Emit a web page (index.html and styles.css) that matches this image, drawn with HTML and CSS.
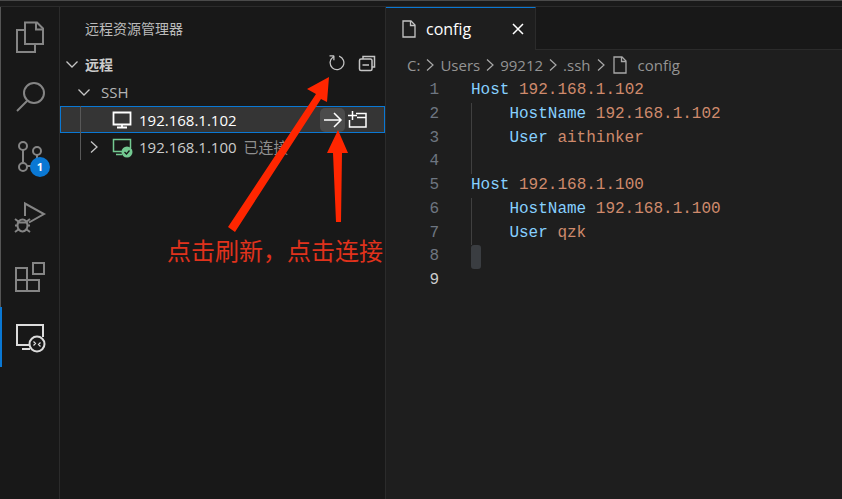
FILE: index.html
```html
<!DOCTYPE html>
<html lang="zh">
<head>
<meta charset="utf-8">
<title>config</title>
<link rel="stylesheet" href="styles.css">
</head>
<body>
<div class="window">
  <div class="titlestrip"></div>
  <div class="main">
    <nav class="activity">
      <div class="cell"><svg class="act" viewBox="0 7 60 60" width="60" height="60"><path d="M25 30h-8v22h18v-8"/><path d="M25 22.500h12l6 6V44H25z"/><path d="M36 22.500v7h7"/></svg></div>
      <div class="cell"><svg class="act" viewBox="0 67 60 60" width="60" height="60"><circle cx="34" cy="93" r="10"/><path d="M27 101L17 111"/></svg></div>
      <div class="cell">
        <svg class="act" viewBox="0 127 60 60" width="60" height="60"><circle cx="23" cy="146" r="4"/><circle cx="37" cy="151" r="4"/><circle cx="23" cy="167" r="4"/><path d="M23 150v13M27 166h4l6-4v-7"/></svg>
        <span class="badge">1</span>
      </div>
      <div class="cell"><svg class="act" viewBox="0 187 60 60" width="60" height="60"><path d="M25 216V203.500l19 10.500-15 8.500"/><ellipse cx="22.500" cy="225.500" rx="5" ry="6"/><path d="M15 219l4 3M30 219l-4 3M15 225.500h3M27 225.500h3M15 232l4-3M30 232l-4-3M18.500 222.500h8"/></svg></div>
      <div class="cell"><svg class="act" viewBox="0 247 60 60" width="60" height="60"><path d="M16 268h11v23H16zM16 280h23v11H27v-11M39 280v-1M33 263h11v11H33z"/></svg></div>
      <div class="cell cell-active">
        <svg class="act-on" viewBox="0 307 60 60" width="60" height="60"><path d="M29 345H17v-20h26v12"/><path d="M22 349h8"/><circle cx="37" cy="344" r="7.500"/><path d="M33.500 345.500l2-2-2-2M40.500 342.500l-2 2 2 2" class="thin"/></svg>
      </div>
    </nav>

    <aside class="sidebar">
      <div class="side-title">远程资源管理器</div>
      <div class="row row-head">
        <svg class="chev" viewBox="0 0 16 16" width="16" height="16"><path d="M2.500 5.500L8 11l5.500-5.500"/></svg>
        <span class="head-label">远程</span>
        <span class="row-actions">
          <svg class="refresh" viewBox="0 1 16 16" width="20" height="20"><path d="M4.681 3H2V2h3.500l.5.500V6H5V4a5 5 0 1 0 4.530-.761l.302-.954A6 6 0 1 1 4.681 3z"/></svg>
          <svg class="ico ico-grey" viewBox="0 0 20 20" width="20" height="20"><path d="M6 5V2.500h11.500V13H15"/><rect x="2.500" y="5" width="12.500" height="11.500" rx="1.500"/><path d="M5.500 11h6.500"/></svg>
        </span>
      </div>
      <div class="row row-ssh">
        <svg class="chev" viewBox="0 0 16 16" width="16" height="16"><path d="M2.500 5.500L8 11l5.500-5.500"/></svg>
        <span class="ssh-label">SSH</span>
      </div>
      <div class="hosts">
        <div class="row row-selected">
          <svg class="ico ico-white monitor" viewBox="0 0 20 18" width="20" height="18"><path d="M1.500 1.500h17v12h-17z"/><path d="M10 13.500v3M5 16.500h10"/></svg>
          <span class="host">192.168.1.102</span>
          <span class="row-actions row-actions-sel">
            <span class="hover-btn"><svg class="ico ico-white" viewBox="0 0 20 20" width="20" height="20"><path d="M1 10h17M11 3l7 7-7 7"/></svg></span>
            <svg class="ico ico-white addwin" viewBox="0 0 20 18" width="20" height="18"><path d="M8 2.500h10v13.500H1.500V9"/><path d="M9 6.500h9"/><path d="M4.500 0v9M0 4.500h9"/></svg>
          </span>
        </div>
        <div class="row row-host">
          <svg class="chev chev-r" viewBox="0 0 16 16" width="16" height="16"><path d="M5 2.500L11 8l-6 5.500"/></svg>
          <svg class="green-mon" viewBox="0 0 22 20" width="22" height="20"><path d="M10 13.500H1.500v-12h17V10"/><path d="M4 16.500h6"/><circle cx="15" cy="14" r="5.500" class="dot"/><path d="M12.500 14l2 2 3-3.500" class="tick"/></svg>
          <span class="host">192.168.1.100</span>
          <span class="status">已连接</span>
        </div>
      </div>
    </aside>

    <section class="editor">
      <div class="tabbar">
        <div class="tab">
          <svg class="file" viewBox="0 0 14 18" width="14" height="18"><path d="M1 1h8l4 4v12H1z"/><path d="M8.500 1v4.500H13"/></svg>
          <span class="tab-name">config</span>
          <svg class="close" viewBox="0 0 12 12" width="12" height="12"><path d="M1 1l10 10M11 1L1 11"/></svg>
        </div>
      </div>
      <div class="crumbs">
        <span>C:</span><svg class="sep" viewBox="0 0 10 14" width="10" height="14"><path d="M2 1.500L8 7l-6 5.500"/></svg>
        <span>Users</span><svg class="sep" viewBox="0 0 10 14" width="10" height="14"><path d="M2 1.500L8 7l-6 5.500"/></svg>
        <span>99212</span><svg class="sep" viewBox="0 0 10 14" width="10" height="14"><path d="M2 1.500L8 7l-6 5.500"/></svg>
        <span>.ssh</span><svg class="sep" viewBox="0 0 10 14" width="10" height="14"><path d="M2 1.500L8 7l-6 5.500"/></svg>
        <svg class="file file-crumb" viewBox="0 0 14 18" width="14" height="18"><path d="M1 1h8l4 4v12H1z"/><path d="M8.500 1v4.500H13"/></svg>
        <span class="crumb-file">config</span>
      </div>
      <div class="code">
        <div class="line"><span class="ln">1</span><span class="tx"><span class="kw">Host</span> <span class="val">192.168.1.102</span></span></div>
        <div class="line"><span class="ln">2</span><span class="guide"></span><span class="tx"><span class="kw">HostName</span> <span class="val">192.168.1.102</span></span></div>
        <div class="line"><span class="ln">3</span><span class="guide"></span><span class="tx"><span class="kw">User</span> <span class="val">aithinker</span></span></div>
        <div class="line"><span class="ln">4</span><span class="guide"></span></div>
        <div class="line"><span class="ln">5</span><span class="tx"><span class="kw">Host</span> <span class="val">192.168.1.100</span></span></div>
        <div class="line"><span class="ln">6</span><span class="guide"></span><span class="tx"><span class="kw">HostName</span> <span class="val">192.168.1.100</span></span></div>
        <div class="line"><span class="ln">7</span><span class="guide"></span><span class="tx"><span class="kw">User</span> <span class="val">qzk</span></span></div>
        <div class="line"><span class="ln">8</span><span class="caret-block"></span></div>
        <div class="line"><span class="ln ln-cur">9</span></div>
      </div>
    </section>
  </div>

  <svg class="annot" viewBox="0 0 842 499" width="842" height="499">
    <polygon points="329,77 307,89 316,94 228,227 235,232 321,99 327,102"/>
    <polygon points="338,130 348,153 342,153 341,222 336,222 333,153 327,153"/>
  </svg>
  <div class="annot-text">点击刷新，点击连接</div>
</div>
</body>
</html>
```

FILE: styles.css
```css
* { box-sizing: border-box; }
html, body { margin: 0; padding: 0; }
body {
  width: 842px;
  height: 499px;
  overflow: hidden;
  background: #181818;
  font-family: "Open Sans", "Noto Sans CJK SC", sans-serif;
}
svg { display: block; flex: none; fill: none; }
.window { position: relative; width: 842px; height: 499px; display: flex; flex-direction: column; }
.titlestrip { height: 7px; background: #1a1a1a; border-top: 1px solid #4a4a4a; border-bottom: 1px solid #2b2b2b; }
.main { flex: 1; display: flex; min-height: 0; }

/* activity bar */
.activity {
  width: 60px;
  flex: none;
  background: #181818;
  border-right: 1px solid #2b2b2b;
  display: flex;
  flex-direction: column;
}
.cell { position: relative; width: 60px; height: 60px; flex: none; box-shadow: inset 1px 0 0 #555; }
.act path, .act circle, .act ellipse { stroke: #858585; stroke-width: 2; }
.badge {
  position: absolute;
  left: 30px;
  top: 30px;
  width: 20px;
  height: 20px;
  border-radius: 50%;
  background: #0a78d4;
  color: #fff;
  font: 700 11px/20px "Open Sans", sans-serif;
  text-align: center;
}
.cell-active { box-shadow: inset 2px 0 0 #0a78d4; }
.act-on path, .act-on circle { stroke: #dcdcdc; stroke-width: 2; }
.act-on .thin { stroke-width: 1.200; }

/* sidebar */
.sidebar {
  width: 326px;
  flex: none;
  background: #181818;
  border-right: 1px solid #2b2b2b;
  color: #ccc;
}
.side-title {
  height: 43px;
  padding: 0 0 0 25px;
  font-size: 14px;
  line-height: 44px;
  color: #bbb;
}
.row {
  height: 27px;
  display: flex;
  align-items: center;
  font-size: 15px;
  white-space: nowrap;
}
.chev path { stroke: #c5c5c5; stroke-width: 1.300; }
.row-head { padding-left: 4px; }
.head-label { margin-left: 5px; font-size: 14px; font-weight: 700; color: #ccc; }
.row-actions { margin-left: auto; display: flex; align-items: center; }
.row-head .row-actions { gap: 10px; padding-right: 8px; }
.refresh path { fill: #c5c5c5; }
.row-ssh { height: 29px; padding-left: 16px; }
.ssh-label { margin-left: 9px; font-size: 15px; color: #b5b5b5; }
.hosts { position: relative; }
.hosts::before {
  content: "";
  position: absolute;
  z-index: 1;
  left: 20px;
  top: 0;
  bottom: 0;
  width: 1px;
  background: #585858;
}
.ico path, .ico rect { stroke-width: 1.500; }
.ico-grey path, .ico-grey rect { stroke: #c5c5c5; }
.ico-white path { stroke: #fff; }
.monitor path { stroke-width: 1.800; }
.row-selected {
  background: #353535;
  border: 1px solid #0a78d4;
  padding-left: 51px;
  color: #fff;
}
.row-selected .host { margin-left: 7px; }
.row-actions-sel { padding-right: 16px; gap: 3px; }
.hover-btn {
  width: 25px;
  height: 24px;
  border-radius: 5px;
  background: #4b4b4b;
  display: flex;
  align-items: center;
  justify-content: center;
}
.row-host { padding-left: 26px; }
.row-host .host { margin-left: 5px; color: #ccc; }
.chev-r path { stroke: #c5c5c5; }
.green-mon { margin-left: 10px; margin-top: 2px; }
.green-mon path { stroke: #73c991; stroke-width: 1.500; }
.green-mon .dot { fill: #73c991; stroke: none; }
.green-mon .tick { stroke: #181818; stroke-width: 1.300; }
.status { margin-left: 7px; font-size: 15px; color: #8f8f8f; }

/* editor */
.editor { flex: 1; min-width: 0; background: #1e1e1e; display: flex; flex-direction: column; }
.tabbar { height: 43px; background: #181818; border-bottom: 1px solid #2b2b2b; flex: none; }
.tab {
  width: 150px;
  height: 43px;
  background: #1e1e1e;
  border-top: 1px solid #0a78d4;
  border-right: 1px solid #2b2b2b;
  display: flex;
  align-items: center;
  padding: 0 0 0 16px;
}
.file path { stroke: #c5c5c5; stroke-width: 1.300; }
.tab-name { margin-left: 10px; font-size: 16px; color: #fff; }
.close { margin-left: 41px; }
.close path { stroke: #fff; stroke-width: 1.500; }
.crumbs {
  height: 29px;
  flex: none;
  display: flex;
  align-items: center;
  padding-left: 21px;
  gap: 5px;
  font-size: 15px;
  color: #949494;
}
.sep path { stroke: #a8a8a8; stroke-width: 1.200; }
.file-crumb { margin-left: 2px; }
.file-crumb path { stroke: #a8a8a8; }
.crumb-file { margin-left: 6px; }
.code { font: 16px/23.750px "Liberation Mono", monospace; }
.line { height: 23.750px; display: flex; white-space: pre; }
.ln { width: 53px; flex: none; text-align: right; color: #6e7681; margin-right: 32px; }
.ln-cur { color: #ccc; }
.guide { width: 38.400px; flex: none; border-left: 1px solid #404040; }
.kw { color: #86d0ff; }
.val { color: #cf8a6c; }
.caret-block { width: 10px; height: 23.750px; background: #3a3d41; border-radius: 3px; }

/* annotation overlay */
.annot { position: absolute; left: 0; top: 0; pointer-events: none; }
.annot polygon { fill: #ff2600; }
.annot-text {
  position: absolute;
  left: 167px;
  top: 235px;
  font: 24px/30px "Noto Sans CJK SC", sans-serif;
  color: #e0321c;
  white-space: nowrap;
}
```
